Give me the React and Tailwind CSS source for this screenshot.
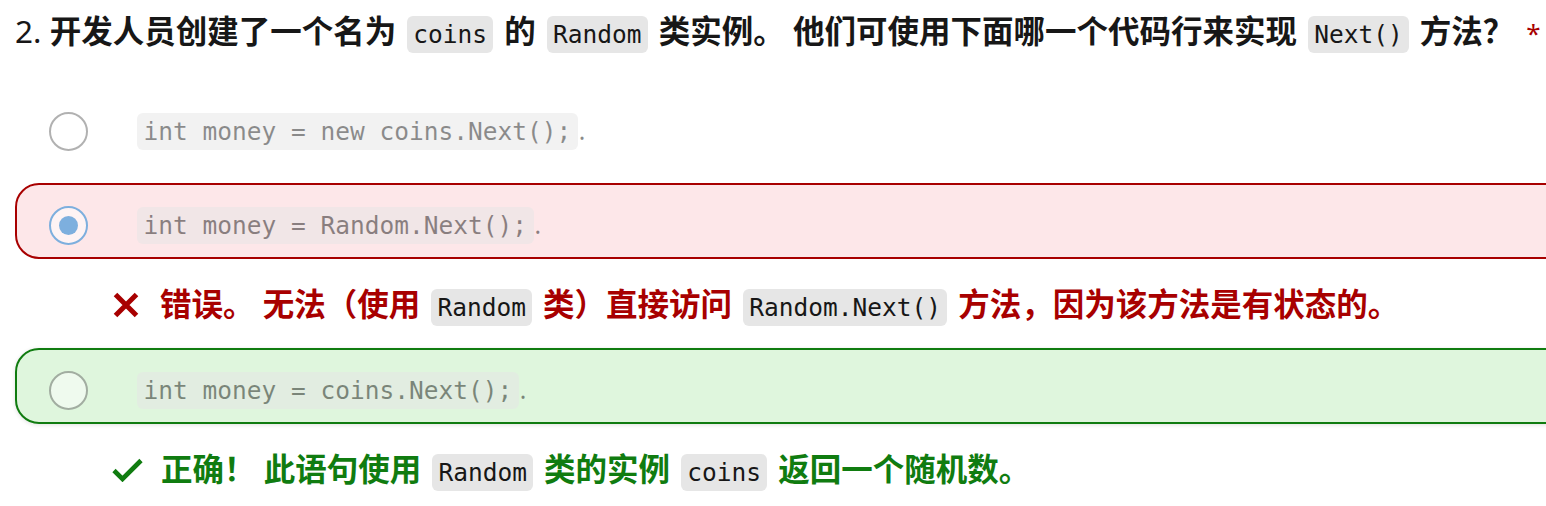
import React from "react";

const sans = "font-['Noto_Sans','Noto_Sans_CJK_SC',sans-serif]";
const mono = "font-['DejaVu_Sans_Mono','Liberation_Mono',monospace]";

const Code = ({ children }) => (
  <span
    className={`${mono} inline-block h-[37px] mx-[3px] rounded-[6px] bg-[#e6e6e6] px-[6px] text-[24.5px] font-normal leading-[37px] text-[#171717]`}
  >
    {children}
  </span>
);

const CrossIcon = () => (
  <svg width="28" height="28" viewBox="0 0 28 28" className="shrink-0">
    <path d="M3.5 3.5L24.5 24.5M24.5 3.5L3.5 24.5" stroke="#a80000" strokeWidth="5" fill="none" />
  </svg>
);

const CheckIcon = () => (
  <svg width="31" height="24" viewBox="0 0 31 24" className="shrink-0">
    <path d="M2 12.5l8.5 8.5L29 2.5" stroke="#107c10" strokeWidth="4.6" fill="none" />
  </svg>
);

const Radio = ({ checked }) => (
  <span
    className={`flex h-[39px] w-[39px] shrink-0 items-center justify-center rounded-full border-2 bg-white ${
      checked ? "border-[#0078d4]" : "border-[#666666]"
    }`}
  >
    {checked && <span className="h-[19px] w-[19px] rounded-full bg-[#0078d4]" />}
  </span>
);

const Option = ({ code, checked, tone }) => {
  const box =
    tone === "wrong"
      ? "border-[#a80000] bg-[#fde7e9]"
      : tone === "right"
      ? "border-[#107c10] bg-[#dff6dd] shadow-[0_1px_4px_rgba(0,0,0,0.12)]"
      : "border-transparent";
  return (
    <div className={`ml-[15px] flex h-[76px] w-[1600px] items-center rounded-[24px] border-2 pl-[32px] ${box}`}>
      <div className="mt-[8px] flex items-center opacity-50">
        <Radio checked={checked} />
        <p className="ml-[49px] text-[24.5px] leading-[37px] text-[#171717] whitespace-nowrap">
          <span className={`${mono} inline-block h-[37px] rounded-[6px] bg-[#e6e6e6] px-[6.5px]`}>{code}</span>
          <span className="ml-[1px]">.</span>
        </p>
      </div>
    </div>
  );
};

const Feedback = ({ ok, children }) => (
  <div className="flex h-[89px] items-center pt-[3px] pl-[112px]">
    {ok ? <CheckIcon /> : <CrossIcon />}
    <p
      className={`${ok ? "ml-[18px] text-[#107c10]" : "ml-[20px] text-[#a80000]"} text-[31.5px] font-bold leading-[37px] whitespace-nowrap`}
    >
      {children}
    </p>
  </div>
);

export default function App() {
  return (
    <div className={`${sans} h-[506px] w-[1546px] overflow-hidden bg-white`}>
      <div className="flex h-[64px] items-center pl-[15px]">
        <p className="text-[31.5px] font-bold leading-[37px] text-[#171717] whitespace-nowrap">
          <span className="font-normal">2.</span> 开发人员创建了一个名为 <Code>coins</Code> 的 <Code>Random</Code>{" "}
          类实例。 他们可使用下面哪一个代码行来实现 <Code>Next()</Code> 方法？
          <span className="ml-[12px] text-[26px] font-normal text-[#a80000]">*</span>
        </p>
      </div>

      <div className="mt-[25px]">
        <Option code="int money = new coins.Next();" />
        <div className="mt-[18px]">
          <Option code="int money = Random.Next();" checked tone="wrong" />
        </div>
        <Feedback>
          错误。 无法（使用 <Code>Random</Code> 类）直接访问 <Code>Random.Next()</Code> 方法，因为该方法是有状态的。
        </Feedback>
        <Option code="int money = coins.Next();" tone="right" />
        <Feedback ok>
          正确！ 此语句使用 <Code>Random</Code> 类的实例 <Code>coins</Code> 返回一个随机数。
        </Feedback>
      </div>
    </div>
  );
}
